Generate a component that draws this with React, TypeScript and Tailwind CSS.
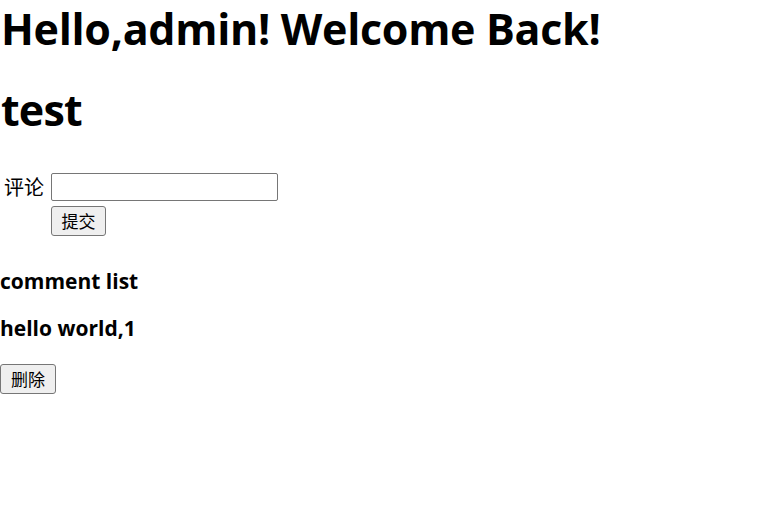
import React from "react";

export default function App() {
  return (
    <div className="w-[773px] h-[508px] bg-white text-black font-['Open_Sans','Noto_Sans_CJK_SC',sans-serif]">
      <h1 className="m-0 pt-[1px] text-[43px] leading-[56px] font-bold pl-[1px] tracking-[-0.3px]">Hello,admin! Welcome Back!</h1>
      <h1 className="m-0 mt-[25px] text-[43px] leading-[56px] font-bold pl-[1px] tracking-[-0.8px]">test</h1>
      <form className="mt-[35px]" onSubmit={(e) => e.preventDefault()}>
        <div className="flex items-end">
          <label className="w-[51px] pl-[4px] text-[20px] leading-[24px] pb-[2px] font-['Noto_Sans_CJK_SC',sans-serif]">评论</label>
          <input type="text" className="w-[227px] h-[28px] border border-[#767676] rounded-[2px] bg-white px-1 outline-none" />
        </div>
        <div className="pl-[51px] mt-[5px]">
          <button type="submit" className="w-[55px] h-[30px] border border-[#767676] rounded-[3px] bg-[#efefef] text-[17px] leading-[20px] font-['Noto_Sans_CJK_SC',sans-serif]">提交</button>
        </div>
      </form>
      <h4 className="m-0 mt-[31px] text-[21px] leading-[28px] font-bold">comment list</h4>
      <h4 className="m-0 mt-[19px] text-[21px] leading-[28px] font-bold">hello world,1</h4>
      <button className="mt-[22px] block w-[56px] h-[30px] border border-[#767676] rounded-[3px] bg-[#efefef] text-[17px] leading-[20px] font-['Noto_Sans_CJK_SC',sans-serif]">删除</button>
    </div>
  );
}
